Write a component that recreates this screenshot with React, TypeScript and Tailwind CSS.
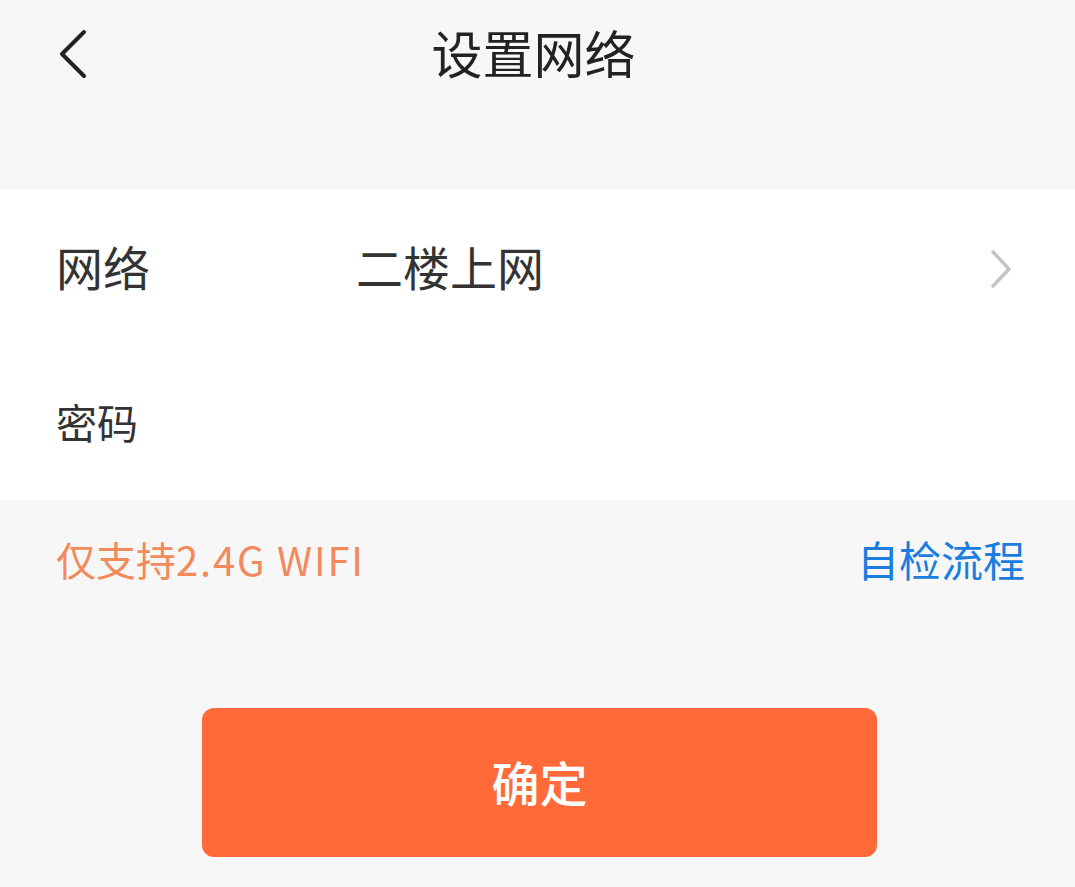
const cjk = { fontFamily: '"Noto Sans CJK SC", "Noto Sans", sans-serif' };

function BackIcon() {
  return (
    <svg width="34" height="50" viewBox="0 0 34 50" fill="none">
      <path d="M28 3 L6 25 L28 47" stroke="#222" strokeWidth="4" strokeLinecap="round" strokeLinejoin="round" />
    </svg>
  );
}

function ChevronRight() {
  return (
    <svg width="24" height="40" viewBox="0 0 24 40" fill="none">
      <path d="M4 3 L20 20 L4 37" stroke="#c4c4c4" strokeWidth="3.5" strokeLinecap="round" strokeLinejoin="round" />
    </svg>
  );
}

export default function App() {
  return (
    <div className="w-[1075px] h-[887px] bg-[#f7f7f7] overflow-hidden" style={cjk}>
      <div className="relative h-[112px] flex items-center justify-center pb-[8px]">
        <button className="absolute left-[56px] top-[29px]">
          <BackIcon />
        </button>
        <h1 className="mr-[8px] text-[51px] text-[#222] leading-none">设置网络</h1>
      </div>
      <div className="h-[77px]" />

      <div className="bg-white">
        <div className="h-[160px] flex items-center pl-[56px] pr-[62px]">
          <span className="w-[300px] pb-[8px] text-[47px] text-[#333] leading-none">网络</span>
          <span className="flex-1 pb-[8px] text-[47px] text-[#333] leading-none">二楼上网</span>
          <ChevronRight />
        </div>
        <div className="h-[151px] flex items-center pl-[56px] pb-[6px]">
          <span className="text-[41px] text-[#333] leading-none">密码</span>
        </div>
      </div>

      <div className="h-[124px] flex items-center justify-between pl-[56px] pr-[50px] pb-[6px]">
        <span className="text-[40px] text-[#f28a5c] leading-none">
          仅支持<span className="tracking-[1.8px]">2.4G WIFI</span>
        </span>
        <span className="text-[42px] text-[#1a7de0] leading-none">自检流程</span>
      </div>

      <div className="mt-[84px] flex justify-center">
        <button className="ml-[4px] w-[675px] h-[149px] pb-[4px] rounded-[12px] bg-[#ff6a38] text-white text-[48px] font-medium leading-none">
          确定
        </button>
      </div>
    </div>
  );
}
